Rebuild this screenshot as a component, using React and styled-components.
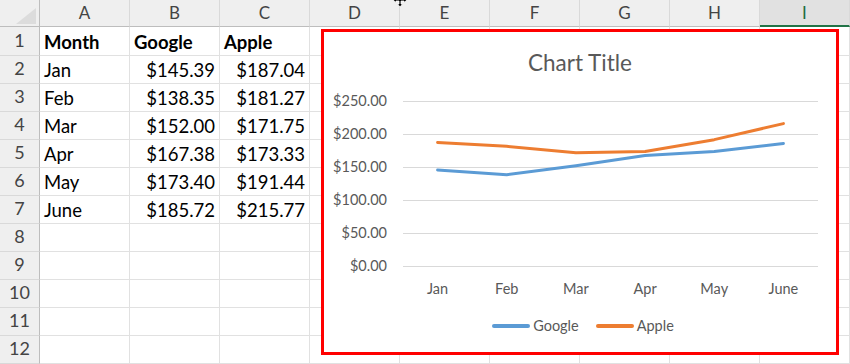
import React from "react";
import styled, { createGlobalStyle } from "styled-components";

const columns = ["A", "B", "C", "D", "E", "F", "G", "H", "I"];
const selectedColumn = "I";

const table = [
  ["Month", "Google", "Apple"],
  ["Jan", "$145.39", "$187.04"],
  ["Feb", "$138.35", "$181.27"],
  ["Mar", "$152.00", "$171.75"],
  ["Apr", "$167.38", "$173.33"],
  ["May", "$173.40", "$191.44"],
  ["June", "$185.72", "$215.77"],
];

const months = ["Jan", "Feb", "Mar", "Apr", "May", "June"];
const ticks = ["$250.00", "$200.00", "$150.00", "$100.00", "$50.00", "$0.00"];

const series = [
  { name: "Google", color: "#5b9bd5", values: [145.39, 138.35, 152.0, 167.38, 173.4, 185.72] },
  { name: "Apple", color: "#ed7d31", values: [187.04, 181.27, 171.75, 173.33, 191.44, 215.77] },
];

// plot geometry (px)
const PLOT_W = 415;
const PLOT_H = 183;
const TOP_LINE = 9;
const STEP = 33;
const ZERO_Y = TOP_LINE + STEP * 5;

const xAt = (i) => ((i + 0.5) * PLOT_W) / months.length;
const yAt = (v) => ZERO_Y - (v * STEP) / 50;

const App = () => {
  return (
    <>
      <GlobalStyle />
      <Sheet>
        <Grid>
          <Corner>
            <CornerMark />
          </Corner>
          {columns.map((c) => (
            <ColHeader key={c} $selected={c === selectedColumn}>
              {c}
            </ColHeader>
          ))}

          {Array.from({ length: 12 }, (_, r) => (
            <React.Fragment key={r}>
              <RowHeader>{r + 1}</RowHeader>
              {columns.map((c, ci) => {
                const value = table[r]?.[ci] ?? "";
                const isHead = r === 0;
                return (
                  <Cell key={c} $bold={isHead} $right={!isHead && ci > 0}>
                    {value}
                  </Cell>
                );
              })}
            </React.Fragment>
          ))}
        </Grid>

        <Cursor viewBox="0 0 16 16" width="16" height="16">
          <path
            d="M8 1 L10.5 4 H9 V7 H12 V5.5 L15 8 L12 10.5 V9 H9 V12 H10.5 L8 15 L5.5 12 H7 V9 H4 V10.5 L1 8 L4 5.5 V7 H7 V4 H5.5 Z"
            fill="#000"
            stroke="#fff"
            strokeWidth="0.8"
          />
        </Cursor>

        <ChartFrame>
          <ChartTitle>Chart Title</ChartTitle>

          <PlotRow>
            <YAxis>
              {ticks.map((t) => (
                <YLabel key={t}>{t}</YLabel>
              ))}
            </YAxis>
            <svg width={PLOT_W} height={PLOT_H}>
              {ticks.map((t, i) => (
                <line
                  key={t}
                  x1="0"
                  x2={PLOT_W}
                  y1={TOP_LINE + STEP * i + 0.5}
                  y2={TOP_LINE + STEP * i + 0.5}
                  stroke="#d9d9d9"
                  strokeWidth="1"
                />
              ))}
              {series.map((s) => (
                <polyline
                  key={s.name}
                  points={s.values.map((v, i) => `${xAt(i)},${yAt(v)}`).join(" ")}
                  fill="none"
                  stroke={s.color}
                  strokeWidth="3"
                  strokeLinecap="round"
                  strokeLinejoin="round"
                />
              ))}
            </svg>
          </PlotRow>

          <XAxis>
            {months.map((m) => (
              <XLabel key={m}>{m}</XLabel>
            ))}
          </XAxis>

          <Legend>
            {series.map((s) => (
              <LegendItem key={s.name}>
                <Swatch $color={s.color} />
                {s.name}
              </LegendItem>
            ))}
          </Legend>
        </ChartFrame>
      </Sheet>
    </>
  );
};

export default App;

// ===== styles =====
const GlobalStyle = createGlobalStyle`
  html, body { margin: 0; padding: 0; background: #fff; }
  body { overflow: hidden; }
  * { box-sizing: border-box; }
`;

const Sheet = styled.div`
  position: relative;
  width: 850px;
  height: 364px;
  overflow: hidden;
  background: #fff;
  font-family: Lato, "Liberation Sans", sans-serif;
`;

const Grid = styled.div`
  display: grid;
  grid-template-columns: 40px repeat(8, 90px) 90px;
  grid-template-rows: 27px 29px repeat(11, 28px);
`;

const Corner = styled.div`
  position: relative;
  background: #efefef;
  border-right: 1px solid #bdbdbd;
  border-bottom: 1px solid #bdbdbd;
`;

const CornerMark = styled.div`
  position: absolute;
  right: 3px;
  bottom: 2px;
  width: 0;
  height: 0;
  border-left: 20px solid transparent;
  border-bottom: 16px solid #dcdcdc;
`;

const ColHeader = styled.div`
  background: ${(p) => (p.$selected ? "#e1e1e1" : "#efefef")};
  color: ${(p) => (p.$selected ? "#1e6b41" : "#444")};
  border-right: 1px solid #d9d9d9;
  border-bottom: ${(p) => (p.$selected ? "2px solid #217346" : "1px solid #bdbdbd")};
  font-size: 17px;
  line-height: 26px;
  text-align: center;
`;

const RowHeader = styled.div`
  background: #efefef;
  color: #444;
  border-right: 1px solid #bdbdbd;
  border-bottom: 1px solid #d9d9d9;
  font-size: 18px;
  line-height: 28px;
  text-align: center;
  display: flex;
  align-items: flex-end;
  justify-content: center;
  padding-bottom: 1px;
`;

const Cell = styled.div`
  border-right: 1px solid #e1e1e1;
  border-bottom: 1px solid #e1e1e1;
  padding: 0 4px 2px 4px;
  font-size: 18.5px;
  font-weight: ${(p) => (p.$bold ? 700 : 400)};
  color: #000;
  text-align: ${(p) => (p.$right ? "right" : "left")};
  display: flex;
  align-items: flex-end;
  justify-content: ${(p) => (p.$right ? "flex-end" : "flex-start")};
  white-space: nowrap;
`;

const Cursor = styled.svg`
  position: absolute;
  left: 392px;
  top: -8px;
`;

const ChartFrame = styled.div`
  position: absolute;
  left: 321px;
  top: 29px;
  width: 518px;
  height: 326px;
  border: 3px solid #ff0000;
  background: #fff;
  display: flex;
  flex-direction: column;
  color: #595959;
`;

const ChartTitle = styled.div`
  margin-top: 18px;
  font-size: 22.5px;
  line-height: 26px;
  text-align: center;
`;

const PlotRow = styled.div`
  margin-top: 16px;
  display: flex;
  gap: 16px;
  padding-left: 3px;

  svg { display: block; }
`;

const YAxis = styled.div`
  width: 60px;
  height: ${PLOT_H}px;
  display: flex;
  flex-direction: column;
  justify-content: space-between;
  align-items: flex-end;
`;

const YLabel = styled.div`
  font-size: 14.5px;
  line-height: 18px;
`;

const XAxis = styled.div`
  margin: 5px 0 0 79px;
  width: ${PLOT_W}px;
  display: grid;
  grid-template-columns: repeat(6, 1fr);
`;

const XLabel = styled.div`
  font-size: 14.5px;
  line-height: 18px;
  text-align: center;
`;

const Legend = styled.div`
  margin-top: 19px;
  display: flex;
  justify-content: center;
  gap: 17px;
  padding-left: 6px;
`;

const LegendItem = styled.div`
  display: flex;
  align-items: center;
  gap: 3px;
  font-size: 14.5px;
  line-height: 18px;
`;

const Swatch = styled.span`
  width: 38px;
  height: 4px;
  border-radius: 2px;
  background: ${(p) => p.$color};
`;
